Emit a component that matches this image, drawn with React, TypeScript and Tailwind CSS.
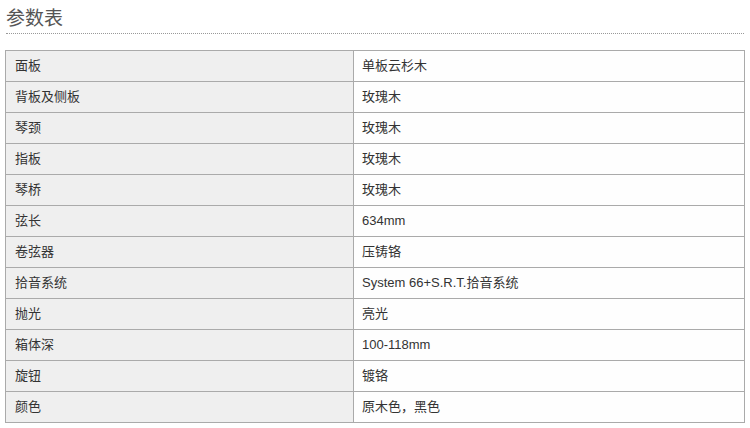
import React from "react";

const rows: [string, string][] = [
  ["面板", "单板云杉木"],
  ["背板及侧板", "玫瑰木"],
  ["琴颈", "玫瑰木"],
  ["指板", "玫瑰木"],
  ["琴桥", "玫瑰木"],
  ["弦长", "634mm"],
  ["卷弦器", "压铸铬"],
  ["拾音系统", "System 66+S.R.T.拾音系统"],
  ["抛光", "亮光"],
  ["箱体深", "100-118mm"],
  ["旋钮", "镀铬"],
  ["颜色", "原木色，黑色"],
];

export default function App() {
  return (
    <div
      className="w-[750px] h-[428px] bg-white overflow-hidden"
      style={{ fontFamily: '"Liberation Sans", Arial, "Noto Sans CJK SC", sans-serif' }}
    >
      <div className="pl-[6px] pr-[6px] pt-[6px]">
        <h2 className="text-[19px] leading-[22px] text-[#555] h-[27px]" style={{ fontFamily: '"Noto Sans CJK SC", sans-serif' }}>
          参数表
        </h2>
        <div className="border-b border-dotted border-[#999] w-[738px]" />
      </div>
      <table className="ml-[5px] mt-[16px] w-[740px] border-collapse text-[13px] text-[#333]">
        <tbody>
          {rows.map(([k, v]) => (
            <tr key={k} className="h-[31px]">
              <td className="w-[348px] bg-[#efefef] border border-[#aaa] pl-[9px] py-0 align-middle">{k}</td>
              <td className="bg-[#fefefe] border border-[#aaa] pl-[8px] py-0 align-middle">{v}</td>
            </tr>
          ))}
        </tbody>
      </table>
    </div>
  );
}
